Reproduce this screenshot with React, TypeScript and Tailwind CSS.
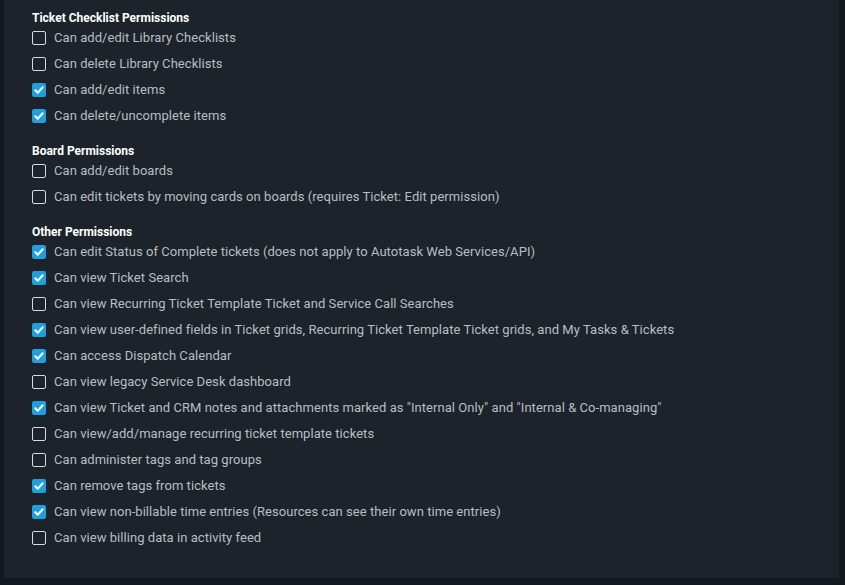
const groups: { title: string; items: [string, boolean][] }[] = [
  {
    title: "Ticket Checklist Permissions",
    items: [
      ["Can add/edit Library Checklists", false],
      ["Can delete Library Checklists", false],
      ["Can add/edit items", true],
      ["Can delete/uncomplete items", true],
    ],
  },
  {
    title: "Board Permissions",
    items: [
      ["Can add/edit boards", false],
      ["Can edit tickets by moving cards on boards (requires Ticket: Edit permission)", false],
    ],
  },
  {
    title: "Other Permissions",
    items: [
      ["Can edit Status of Complete tickets (does not apply to Autotask Web Services/API)", true],
      ["Can view Ticket Search", true],
      ["Can view Recurring Ticket Template Ticket and Service Call Searches", false],
      ["Can view user-defined fields in Ticket grids, Recurring Ticket Template Ticket grids, and My Tasks & Tickets", true],
      ["Can access Dispatch Calendar", true],
      ["Can view legacy Service Desk dashboard", false],
      ['Can view Ticket and CRM notes and attachments marked as "Internal Only" and "Internal & Co-managing"', true],
      ["Can view/add/manage recurring ticket template tickets", false],
      ["Can administer tags and tag groups", false],
      ["Can remove tags from tickets", true],
      ["Can view non-billable time entries (Resources can see their own time entries)", true],
      ["Can view billing data in activity feed", false],
    ],
  },
];

function Checkbox({ checked }: { checked: boolean }) {
  if (checked) {
    return (
      <span className="flex h-[14px] w-[14px] shrink-0 items-center justify-center rounded-[2px] bg-[#1e9fe0]">
        <svg viewBox="0 0 14 14" className="h-[14px] w-[14px]" fill="none">
          <path d="M3.3 7.3l2.4 2.4 5-5.4" stroke="#fff" strokeWidth="2" strokeLinecap="round" strokeLinejoin="round" />
        </svg>
      </span>
    );
  }
  return <span className="h-[14px] w-[14px] shrink-0 rounded-[2px] border border-[#d8dadc]" />;
}

export default function App() {
  return (
    <div className="h-[585px] w-[845px] bg-[#121a1f] font-['Roboto',sans-serif]">
      <div className="ml-[4px] h-[578px] w-[835px] bg-[#1c232b] pl-[28px] pt-[11px]">
        {groups.map((g, gi) => (
          <div key={g.title} className={gi > 0 ? "mt-[15px]" : ""}>
            <h3 className="h-[14px] text-[12px] font-bold leading-[14px] text-white">{g.title}</h3>
            <ul>
              {g.items.map(([label, checked]) => (
                <li key={label} className="flex h-[26px] items-center gap-[8px]">
                  <Checkbox checked={checked} />
                  <span className="text-[13px] tracking-[0.05px] text-[#b9bdc2]">{label}</span>
                </li>
              ))}
            </ul>
          </div>
        ))}
      </div>
    </div>
  );
}
